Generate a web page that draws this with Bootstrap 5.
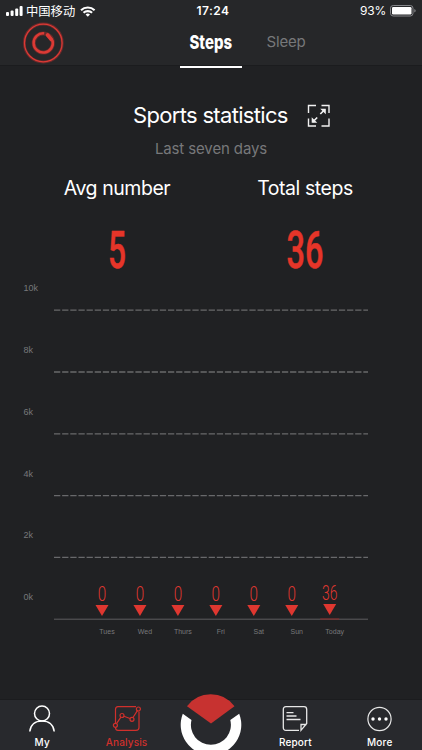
<!DOCTYPE html>
<html lang="en">
<head>
    <meta charset="UTF-8">
    <meta name="viewport" content="width=device-width, initial-scale=1.0">
    <title>Sports statistics</title>
    <link href="https://cdn.jsdelivr.net/npm/bootstrap@5.3.0/dist/css/bootstrap.min.css" rel="stylesheet">
    <style>
        body { background: #202123; color: #fff; font-family: Inter, "Noto Sans CJK SC", sans-serif; }
        svg { display: block; flex: none; overflow: visible; }
        .screen { width: 422px; height: 750px; }
        .topbar { height: 66px; background: #262729; border-bottom: 1px solid #1b1c1e; }
        .statusbar { height: 22px; padding: 0 6px; font-size: 12px; line-height: 22px; }
        .carrier { width: 50px; margin-left: 3px; font-family: "Noto Sans CJK SC", sans-serif; font-size: 12.3px; white-space: nowrap; }
        .clock { font-weight: 600; font-size: 12px; letter-spacing: .45px; padding-left: 4px; }
        .battery-text { font-size: 12px; letter-spacing: -.2px; }
        .tabs { height: 45px; padding-left: 23px; }
        .tab-item { width: 62px; height: 46px; line-height: 39px; white-space: nowrap; }
        .tab-on { margin-left: 117px; border-bottom: 2px solid #fff; }
        .tab-off { margin-left: 13px; color: #77787a; font-size: 15px; letter-spacing: -.2px; }
        .title-row { margin-top: 32px; height: 34px; padding-left: 133px; }
        .page-title { width: 174px; font-size: 22px; font-weight: 400; letter-spacing: -.68px; white-space: nowrap; }
        .range { height: 33px; line-height: 34px; color: #77787a; font-size: 15px; letter-spacing: -.12px; }
        .stats { padding: 10px 23px 0; height: 113px; }
        .stat-name { font-size: 19.5px; line-height: 26px; letter-spacing: -.45px; }
        .bignum { font: 500 52px Roboto, sans-serif; fill: #e63529; stroke: #e63529; stroke-width: .5px; }
        .chart .axis { font: 9px "Liberation Sans", sans-serif; fill: #77787a; }
        .chart .day { font: 7px "Liberation Sans", sans-serif; fill: #77787a; }
        .chart .val { font: 300 20.5px Roboto, sans-serif; fill: #df3730; }
        .bottombar { height: 51px; background: #28292d; border-top: 1px solid #1b1c1e; }
        .nav-cell { width: 84.4px; padding-top: 5px; font-size: 10px; font-weight: 500; line-height: 12px; letter-spacing: .15px; }
        .nav-cell svg { margin-bottom: 4px; }
        .nav-on { color: #d0302c; }
        .home { margin-top: -6px; }
    </style>
</head>
<body>
    <div class="screen d-flex flex-column overflow-hidden">
        <header class="topbar flex-shrink-0">
            <div class="statusbar row g-0">
                <div class="col d-flex align-items-center">
                    <svg width="17" height="10" fill="#fff">
                        <rect x="0" y="6" width="3" height="4" rx="1"/>
                        <rect x="4.6" y="4.5" width="3" height="5.5" rx="1"/>
                        <rect x="9.2" y="2.5" width="3" height="7.5" rx="1"/>
                        <rect x="13.6" y="0" width="3" height="10" rx="1"/>
                    </svg>
                    <span class="carrier">中国移动</span>
                    <svg class="ms-1" width="16" height="11" viewBox="0 0 16 11" fill="none" stroke="#fff" stroke-width="2.1">
                        <path d="M1 4.2a10 10 0 0 1 13.6 0M3.5 6.8a6.3 6.3 0 0 1 8.6 0"/>
                        <path d="M5.6 8.6a3.2 3.2 0 0 1 4.4 0L7.8 10.8z" fill="#fff" stroke="none"/>
                    </svg>
                </div>
                <div class="col-auto text-center clock">17:24</div>
                <div class="col d-flex align-items-center justify-content-end">
                    <span class="battery-text me-1">93%</span>
                    <svg width="26" height="12" viewBox="0 0 26 12">
                        <rect x=".5" y=".5" width="22.5" height="10.5" rx="2.7" fill="none" stroke="#85868a"/>
                        <rect x="2" y="2" width="19.5" height="7.5" rx="1.2" fill="#fff"/>
                        <path d="M24.3 4v3.6q1.4-.5 1.4-1.8T24.3 4" fill="#85868a"/>
                    </svg>
                </div>
            </div>
            <nav class="tabs d-flex">
                <svg width="40" height="40" viewBox="0 0 40 40" fill="none" stroke="#dc3a35">
                    <circle cx="20.3" cy="21" r="19" stroke="#792b2a" stroke-width="2.8" opacity=".8"/>
                    <circle cx="20.3" cy="21" r="18.8" stroke-width="1.2"/>
                    <circle cx="20.3" cy="21" r="9.6" stroke="#7e2c2a" stroke-width="4" opacity=".7"/>
                    <path d="M21.2 11.4a9.6 9.6 0 1 0 8.3 7" stroke-width="2.5"/>
                    <path d="M24.6 13l3.8 4.6" stroke-width="3.8" stroke-linecap="round"/>
                </svg>
                <div class="tab-item tab-on">
                    <svg width="62" height="44"><text x="9.5" y="26.5" textLength="42.5" lengthAdjust="spacingAndGlyphs" fill="#fff" font-family="Inter" font-size="19" font-weight="800">Steps</text></svg>
                </div>
                <div class="tab-item tab-off text-center">Sleep</div>
            </nav>
        </header>

        <main class="flex-grow-1">
            <div class="title-row d-flex align-items-center">
                <h1 class="page-title mb-0">Sports statistics</h1>
                <svg width="23" height="23" viewBox="0 0 23 23" fill="none" stroke="#f1f1f1" stroke-width="1.4">
                    <path d="M1.500 9V1.500h7.500M14.500 1.500H22v7.500M22 14.500V22h-7.500M9 22H1.500v-7.500"/>
                    <path d="M13.300 10l4.500-4.500M10.200 13.500l-4.500 4.500" stroke-width="1.700"/>
                    <path d="M13.200 4.700h5.600v5.600zM4.700 13.200v5.600h5.600z" fill="#f1f1f1" stroke="none"/>
                </svg>
            </div>
            <div class="range text-center">Last seven days</div>
            <div class="stats row g-0 text-center">
                <div class="col-6">
                    <div class="stat-name">Avg number</div>
                    <svg width="188" height="70"><text class="bignum" x="85" y="67" textLength="18" lengthAdjust="spacingAndGlyphs">5</text></svg>
                </div>
                <div class="col-6">
                    <div class="stat-name">Total steps</div>
                    <svg width="188" height="70"><text class="bignum" x="75.500" y="67" textLength="37" lengthAdjust="spacingAndGlyphs">36</text></svg>
                </div>
            </div>
            <svg class="chart" id="stepsChart" width="422" height="365" viewBox="0 278 422 365"></svg>
        </main>

        <footer class="bottombar d-flex flex-shrink-0 text-center">
            <div class="nav-cell d-flex flex-column align-items-center">
                <svg width="26" height="27" viewBox="0 0 26 27" fill="none" stroke="#fff" stroke-width="1.5">
                    <circle cx="13" cy="8.500" r="7.500"/>
                    <path d="M.8 26.500C1.500 19.500 6.500 15.900 13 15.900s11.500 3.600 12.200 10.600"/>
                </svg>
                My
            </div>
            <div class="nav-cell nav-on d-flex flex-column align-items-center">
                <svg width="28" height="27" viewBox="0 0 28 27" fill="none" stroke="#d0302c" stroke-width="1.2">
                    <path d="M23 1.700H5Q2.500 1.700 2.500 4.500V18M2.500 22.500Q2.500 25.300 5 25.300H23Q26 25.300 26 22.500V6.500"/>
                    <circle cx="2.400" cy="20.300" r="2"/>
                    <circle cx="9" cy="10.500" r="2"/>
                    <circle cx="19" cy="14.300" r="2"/>
                    <circle cx="25.400" cy="4" r="2"/>
                    <path d="M3.500 18.600l4.400-6.400M11 11.200l6 2.300M20 12.500l4.400-6.800"/>
                </svg>
                Analysis
            </div>
            <div class="nav-cell home d-flex justify-content-center p-0">
                <svg width="62" height="56" viewBox="180 694 62 56">
                    <path d="M182.800 713.700A30.300 30.300 0 1 0 239.200 713.700L230.300 720A20 20 0 1 1 191.500 720z" fill="#fff"/>
                    <path d="M187 706.200Q196 694.300 210.700 694.300T234.500 706.200L211 723.500z" fill="#c73230"/>
                </svg>
            </div>
            <div class="nav-cell d-flex flex-column align-items-center">
                <svg width="26" height="27" viewBox="0 0 26 27" fill="none" stroke="#e8e8e8" stroke-width="1.3">
                    <path d="M17 25.300H4Q1.300 25.300 1.300 22.500V4.500Q1.300 1.700 4 1.700H22Q24.700 1.700 24.700 4.500V18.500L19 25.300V19.500H24.500"/>
                    <path d="M4.500 7.700h7M4.500 11h10M4.500 14.500h14"/>
                </svg>
                Report
            </div>
            <div class="nav-cell d-flex flex-column align-items-center">
                <svg width="26" height="27" viewBox="0 0 26 27" fill="#fff">
                    <circle cx="12.500" cy="14" r="11.600" fill="none" stroke="#e8e8e8" stroke-width="1.200"/>
                    <circle cx="6" cy="14" r="1.700"/>
                    <circle cx="12.500" cy="14" r="1.700"/>
                    <circle cx="19" cy="14" r="1.700"/>
                </svg>
                More
            </div>
        </footer>
    </div>

    <script src="https://cdn.jsdelivr.net/npm/bootstrap@5.3.0/dist/js/bootstrap.bundle.min.js"></script>
    <script>
        const days = [['Tues', 0], ['Wed', 0], ['Thurs', 0], ['Fri', 0], ['Sat', 0], ['Sun', 0], ['Today', 36]];
        let output = '';

        // grid lines and y axis labels
        ['10k', '8k', '6k', '4k', '2k', '0k'].forEach((label, i) => {
            let y = 310.2 + i * 61.8;
            let dash = i < 5 ? 'stroke="#68696b" stroke-width="1.3" stroke-dasharray="6.3 1.84"' : 'stroke="#5d5e60"';
            output += `<text class="axis" x="23.5" y="${y - 19}">${label}</text>
                <path d="M54 ${y}H368" ${dash}/>`;
        });

        // value, marker and day name
        days.forEach(([day, value], i) => {
            let x = 102 + i * 37.95;
            let lift = value ? 1 : 0;
            let w = value ? 15.5 : 8.5;
            output += `<text class="val" x="${x - w / 2}" y="${601 - lift}" textLength="${w}" lengthAdjust="spacingAndGlyphs">${value}</text>
                <path d="M${x - 6.5} ${605 - lift}h13l-6.5 11z" fill="#df3730"/>
                <text class="day" x="${x + 5}" y="634" text-anchor="middle">${day}</text>`;
            if (value) output += `<path d="M${x - 9.5} 619h19" stroke="#8c2826"/>`;
        });
        document.getElementById('stepsChart').innerHTML = output;
    </script>
</body>
</html>
